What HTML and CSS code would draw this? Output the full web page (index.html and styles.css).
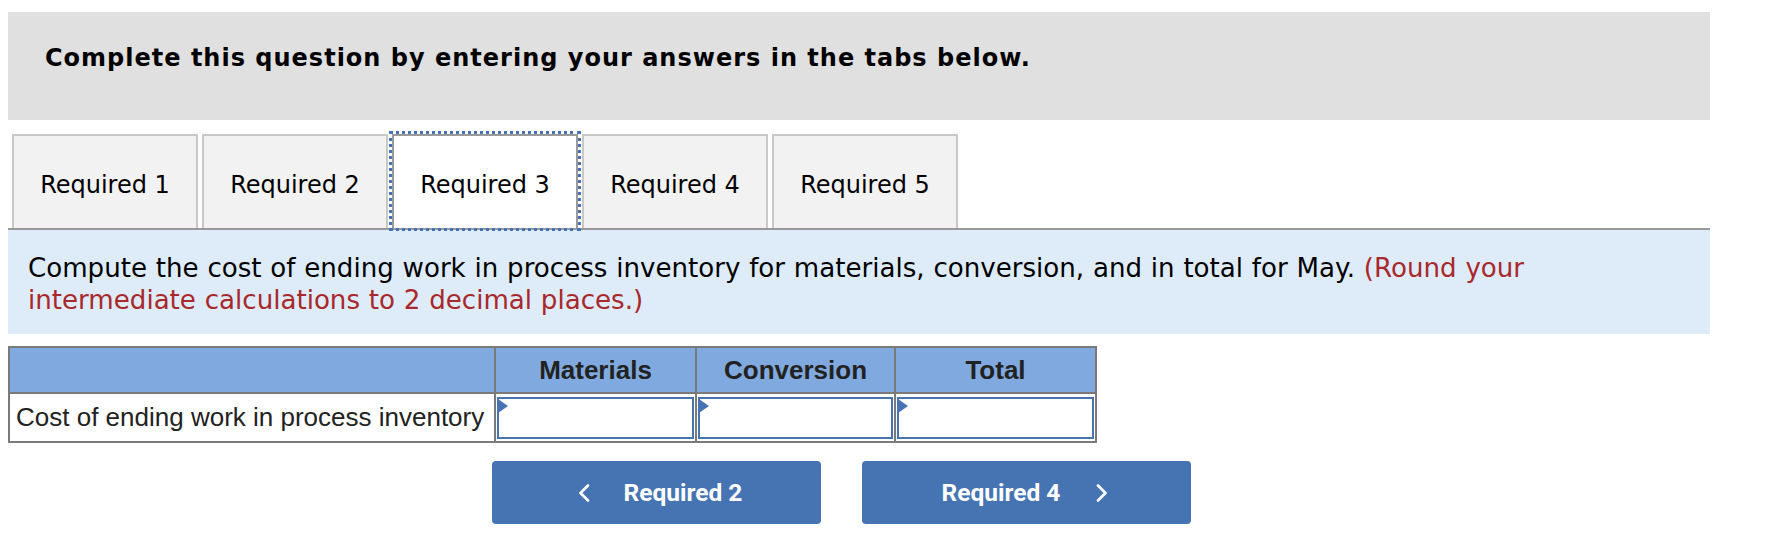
FILE: index.html
```html
<!DOCTYPE html>
<html lang="en">
<head>
<meta charset="utf-8">
<title>Required 3</title>
<link rel="stylesheet" href="styles.css">
</head>
<body>
<div class="page">
  <div class="banner">
    <h2 class="banner-title">Complete this question by entering your answers in the tabs below.</h2>
  </div>

  <div class="tabs">
    <div class="tab">Required 1</div>
    <div class="tab">Required 2</div>
    <div class="tab active">Required 3</div>
    <div class="tab">Required 4</div>
    <div class="tab">Required 5</div>
  </div>

  <div class="prompt">
    <p class="prompt-text">Compute the cost of ending work in process inventory for materials, conversion, and in total for May. <span class="hint">(Round your intermediate calculations to 2 decimal places.)</span></p>
  </div>

  <table class="grid">
    <colgroup>
      <col class="label-col">
      <col class="col-mat">
      <col class="col-conv">
      <col class="col-total">
    </colgroup>
    <thead>
      <tr>
        <th></th>
        <th>Materials</th>
        <th>Conversion</th>
        <th>Total</th>
      </tr>
    </thead>
    <tbody>
      <tr>
        <td class="label">Cost of ending work in process inventory</td>
        <td class="entry"><div class="field"><span class="flag"></span></div></td>
        <td class="entry"><div class="field"><span class="flag"></span></div></td>
        <td class="entry"><div class="field"><span class="flag"></span></div></td>
      </tr>
    </tbody>
  </table>

  <div class="nav">
    <button class="navbtn prev">
      <svg class="chev" width="12" height="18" viewBox="0 0 12 18"><polyline points="10,1.5 2.5,9 10,16.5" fill="none" stroke="#fff" stroke-width="2.6" stroke-linecap="round" stroke-linejoin="round"/></svg>
      <span>Required 2</span>
    </button>
    <button class="navbtn next">
      <span>Required 4</span>
      <svg class="chev" width="12" height="18" viewBox="0 0 12 18"><polyline points="2,1.5 9.5,9 2,16.5" fill="none" stroke="#fff" stroke-width="2.6" stroke-linecap="round" stroke-linejoin="round"/></svg>
    </button>
  </div>
</div>
</body>
</html>
```

FILE: styles.css
```css
html, body {
  margin: 0;
  padding: 0;
  background: #ffffff;
}

.page {
  width: 1702px;
  padding: 12px 0 0 8px;
  font-family: Verdana, "DejaVu Sans", sans-serif;
  color: #000;
}

.banner {
  background: #e0e0e0;
  height: 108px;
  box-sizing: border-box;
  padding: 30px 35px 0 37px;
}

.banner-title {
  margin: 0;
  font-size: 24px;
  line-height: 32px;
  letter-spacing: 1px;
  font-weight: bold;
}

.tabs {
  display: flex;
  margin-top: 14px;
  border-bottom: 2px solid #999999;
}

.tab {
  width: 186px;
  height: 94px;
  box-sizing: border-box;
  margin-left: 4px;
  padding-top: 6px;
  border: 2px solid #c8c8c8;
  border-bottom: none;
  background: #f2f2f2;
  display: flex;
  align-items: center;
  justify-content: center;
  font-size: 24px;
  color: #000;
}

.tab.active {
  background: #ffffff;
  border-color: #9a9a9a;
  outline: 3px dotted #4674b8;
  outline-offset: 0;
}

.prompt {
  background: #deecf9;
  padding: 22px 20px 18px;
}

.prompt-text {
  margin: 0;
  max-width: 1610px;
  font-size: 26.1px;
  line-height: 32px;
  word-spacing: 0.5px;
}

.hint {
  color: #a8282c;
}

.grid {
  margin-top: 12px;
  width: 1087px;
  table-layout: fixed;
  border-collapse: collapse;
  font-family: "Liberation Sans", Arial, sans-serif;
  color: #222;
}

.label-col { width: 486px; }
.col-mat { width: 201px; }
.col-conv { width: 199px; }
.col-total { width: 201px; }

.grid th,
.grid td {
  border: 2px solid #7a7a7a;
  padding: 0;
}

.grid th {
  background: #80aadf;
  height: 44px;
  font-size: 26px;
  font-weight: bold;
  text-align: center;
}

.grid td {
  height: 45px;
  font-size: 26px;
}

.grid td.label {
  padding-left: 6px;
  text-align: left;
  white-space: nowrap;
}

.grid td.entry {
  padding: 1px;
  background: #fff;
}

.field {
  position: relative;
  height: 42px;
  box-sizing: border-box;
  border: 2px solid #4674b3;
  background: #fff;
}

.flag {
  position: absolute;
  left: -1px;
  top: 0;
  width: 0;
  height: 0;
  border-left: 10px solid #4674b3;
  border-top: 7px solid transparent;
  border-bottom: 7px solid transparent;
}

.nav {
  display: flex;
  gap: 41px;
  margin-top: 18px;
  padding-left: 484px;
}

.navbtn {
  width: 329px;
  height: 63px;
  border: none;
  border-radius: 4px;
  background: #4674b3;
  color: #fff;
  font-family: Roboto, "Liberation Sans", sans-serif;
  font-weight: bold;
  font-size: 24.5px;
  display: flex;
  align-items: center;
  justify-content: center;
  gap: 34px;
  padding: 0;
}

.navbtn.prev {
  padding-left: 7px;
}

.navbtn.next {
  padding-right: 3px;
  gap: 36px;
}

.chev {
  display: block;
}
```
